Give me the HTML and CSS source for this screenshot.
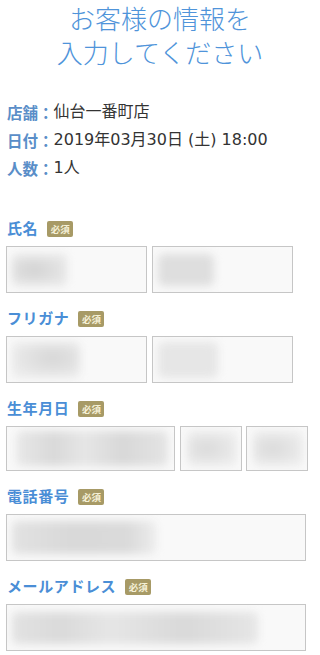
FILE: index.html
```html
<!DOCTYPE html>
<html lang="ja">
<head>
<meta charset="utf-8">
<link rel="stylesheet" href="styles.css">
</head>
<body>
<div class="page">
  <h1 class="title">お客様の情報を<br>入力してください</h1>
  <dl class="info">
    <div class="info-row"><dt>店舗：</dt><dd>仙台一番町店</dd></div>
    <div class="info-row"><dt>日付：</dt><dd>2019年03月30日 (土) 18:00</dd></div>
    <div class="info-row"><dt>人数：</dt><dd>1人</dd></div>
  </dl>

  <div class="field">
    <div class="label">氏名<span class="badge">必須</span></div>
    <div class="inputs">
      <div class="box half"><span class="blob b-name1"></span></div>
      <div class="box half"><span class="blob b-name2"></span></div>
    </div>
  </div>

  <div class="field">
    <div class="label">フリガナ<span class="badge">必須</span></div>
    <div class="inputs">
      <div class="box half"><span class="blob b-kana1"></span></div>
      <div class="box half"><span class="blob b-kana2"></span></div>
    </div>
  </div>

  <div class="field">
    <div class="label">生年月日<span class="badge">必須</span></div>
    <div class="inputs birth">
      <div class="box short year"><span class="blob b-year"></span></div>
      <div class="box short small"><span class="blob b-md"></span></div>
      <div class="box short small"><span class="blob b-md"></span></div>
    </div>
  </div>

  <div class="field">
    <div class="label">電話番号<span class="badge">必須</span></div>
    <div class="inputs">
      <div class="box full"><span class="blob b-tel"></span></div>
    </div>
  </div>

  <div class="field">
    <div class="label">メールアドレス<span class="badge">必須</span></div>
    <div class="inputs">
      <div class="box full"><span class="blob b-mail"></span></div>
    </div>
  </div>
</div>
</body>
</html>
```

FILE: styles.css
```css
* { box-sizing: border-box; }
html, body { margin: 0; padding: 0; background: #fff; }
body {
  font-family: "Noto Sans CJK JP", "Noto Sans", sans-serif;
  color: #333;
  width: 320px;
  overflow: hidden;
}
.page { padding: 0 0 0 6px; }
.title {
  margin: 0 0 0 -6px;
  padding-top: 1px;
  font-size: 26px;
  line-height: 34px;
  font-weight: 300;
  color: #4f94da;
  text-align: center;
}
.info { margin: 29px 0 0 1px; padding: 0; }
.info-row { display: flex; font-size: 16px; line-height: 28px; }
.info dt { font-weight: 700; color: #5a8ec8; margin: 0; font-size: 15.5px; }
.info dd { margin: 0; color: #333; font-family: "DejaVu Sans", "Noto Sans CJK JP", sans-serif; }

.info + .field { margin-top: 34px; }
.field { margin-bottom: 13px; }
.label {
  display: flex;
  align-items: center;
  height: 22px;
  margin-left: 1px;
  font-size: 15px;
  font-weight: 700;
  letter-spacing: 0.6px;
  color: #4a8ed6;
}
.badge {
  display: inline-flex;
  align-items: center;
  justify-content: center;
  margin-left: 9px;
  margin-top: 4px;
  width: 26px;
  height: 16px;
  border-radius: 2px;
  background: #a79a66;
  color: #f5f0d6;
  font-size: 9.5px;
  font-weight: 700;
  letter-spacing: 0;
}
.inputs { display: flex; gap: 5px; margin-top: 8px; }
.box {
  height: 47px;
  border: 1px solid #c6c6c6;
  background: #f9f9f9;
  display: flex;
  align-items: center;
  padding-left: 5px;
  overflow: hidden;
}
.half { width: 141px; }
.full { width: 300px; }
.short { height: 45px; }
.year { width: 169px; padding-left: 9px; }
.small { width: 62px; padding-left: 6px; }
.birth { gap: 5px; }
.birth .small + .small { margin-left: -1px; }
.blob {
  display: block;
  height: 32px;
  background: #dcdcdc;
  filter: blur(4px);
  border-radius: 6px;
}
.b-name1 { width: 55px; background: radial-gradient(ellipse at 40% 50%, #d2d2d2, #e6e6e6 70%); }
.b-name2 { width: 56px; background: #dedede; }
.b-kana1 { width: 68px; height: 36px; background: radial-gradient(ellipse at 60% 45%, #d6d6d6, #ebebeb 75%); }
.b-kana2 { width: 60px; height: 36px; background: #e6e6e6; }
.b-year { width: 152px; height: 35px; background: linear-gradient(90deg, #e8e8e8, #d9d9d9 25%, #e6e6e6 45%, #d8d8d8 70%, #e4e4e4); }
.b-md { width: 50px; height: 35px; background: radial-gradient(ellipse at 40% 50%, #dadada, #ececec 75%); }
.b-tel { width: 144px; height: 33px; background: linear-gradient(90deg, #e2e2e2, #d9d9d9 40%, #dadada 80%, #ececec); }
.b-mail { width: 246px; height: 32px; background: linear-gradient(90deg, #e2e2e2, #dadada 20%, #e6e6e6 40%, #d9d9d9 70%, #e6e6e6 100%); }
```
